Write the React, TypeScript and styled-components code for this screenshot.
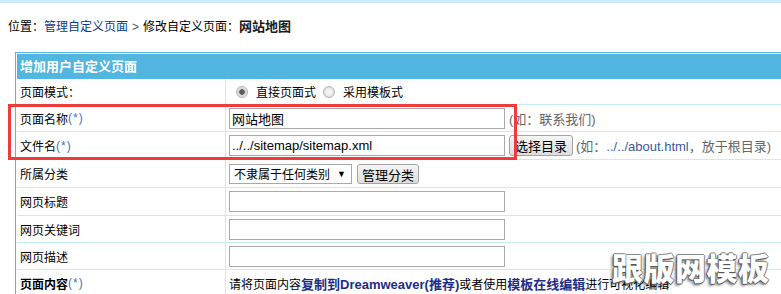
import styled, { createGlobalStyle } from "styled-components";

const GlobalStyle = createGlobalStyle`
  html, body {
    margin: 0;
    padding: 0;
    background: #fff;
    overflow: hidden;
  }
  body {
    font-family: "Liberation Sans", "Noto Sans CJK SC", sans-serif;
    font-size: 12px;
    color: #000;
  }
`;

const Page = styled.div`
  position: relative;
  width: 781px;
  height: 294px;
  overflow: hidden;
`;

const TopStrip = styled.div`
  height: 3px;
  background: #c8eefc;
`;

const Crumbs = styled.div`
  padding: 14px 0 0 8px;
  height: 20px;
  line-height: 20px;
  margin-bottom: 15px;
  white-space: nowrap;
`;

const CrumbLink = styled.a`
  color: #0d3a8e;
  text-decoration: none;
`;

const CrumbSep = styled.span`
  color: #555;
  margin: 0 4px;
`;

const CrumbCurrent = styled.b`
  color: #1a1a1a;
  font-size: 13px;
`;

const Panel = styled.div`
  margin-left: 15px;
  width: 800px;
  border: 1px solid #52b6e0;
  padding: 1px;
`;

const Header = styled.div`
  height: 25px;
  line-height: 25px;
  background: #52b6e0;
  color: #fff;
  font-weight: bold;
  font-size: 13px;
  padding-left: 3px;
`;

const Row = styled.div<{ $h?: number }>`
  display: grid;
  grid-template-columns: 208px 1fr;
  height: ${(p) => (p.$h ? `${p.$h}px` : "auto")};
  box-sizing: border-box;
  border-bottom: 1px solid #c6ebfa;
`;

const Label = styled.div<{ $strong?: boolean }>`
  display: flex;
  align-items: center;
  padding-left: 3px;
  font-weight: ${(p) => (p.$strong ? "bold" : "normal")};
  white-space: nowrap;
`;

const Star = styled.span`
  color: #3d74c5;
  font-weight: normal;
  letter-spacing: 1px;
`;

const Value = styled.div`
  display: flex;
  align-items: center;
  border-left: 1px solid #c6ebfa;
  padding-left: 3px;
  white-space: nowrap;
`;

const Radio = styled.span<{ $on?: boolean }>`
  width: 12px;
  height: 12px;
  box-sizing: border-box;
  border-radius: 50%;
  border: 1px solid #b2b2b2;
  margin: 0 8px 0 7px;
  background: ${(p) =>
    p.$on
      ? "radial-gradient(circle, #5c5c5c 0 2.5px, #cfcfcf 3px, #f2f2f2 6px)"
      : "radial-gradient(circle, #f4f4f4 0 2px, #dadada 6px)"};
`;

const TextInput = styled.input`
  width: 276px;
  height: 21px;
  box-sizing: border-box;
  border: 1px solid #a9a9a9;
  padding: 0 2px;
  margin: 0;
  font: inherit;
  font-size: 13px;
  color: #000;
  background: #fff;
  outline: none;
`;

const Button = styled.button<{ $w: number; $h?: number }>`
  width: ${(p) => p.$w}px;
  height: ${(p) => p.$h ?? 21}px;
  box-sizing: border-box;
  padding: 0;
  border: 1px solid #a3a3a3;
  border-radius: 3px;
  background: linear-gradient(#f6f6f6, #dddddd);
  font: inherit;
  font-size: 13px;
  color: #000;
`;

const FakeSelect = styled.div`
  width: 123px;
  height: 20px;
  box-sizing: border-box;
  border: 1px solid #a9a9a9;
  display: flex;
  align-items: center;
  justify-content: space-between;
  padding: 0 5px 0 4px;
  margin-right: 5px;
  font-size: 12px;
  background: #fff;
`;

const Arrow = styled.span`
  font-size: 9px;
`;

const Hint = styled.span<{ $gap: number }>`
  color: #666;
  font-size: 13px;
  margin-left: ${(p) => p.$gap}px;
`;

const HintPath = styled.span`
  color: #3e5a9c;
`;

const Gap = styled.span<{ $w: number }>`
  display: inline-block;
  width: ${(p) => p.$w}px;
`;

const Em = styled.b`
  color: #1c2d87;
  font-size: 13px;
`;

const Highlight = styled.div`
  position: absolute;
  left: 8px;
  top: 104px;
  width: 509px;
  height: 56px;
  box-sizing: border-box;
  border: 3px solid #f03b3b;
  pointer-events: none;
`;

const Watermark = styled.div`
  position: absolute;
  left: 612px;
  top: 246px;
  font-family: "Noto Sans CJK SC", sans-serif;
  font-size: 31px;
  font-weight: 900;
  line-height: 42px;
  letter-spacing: 0.5px;
  color: #fff;
  text-shadow: -1px 0 #555, 0 1px #555, 1px 0 #888, 0 -1px #888,
    -2px 2px 3px rgba(0, 0, 0, 0.55);
  pointer-events: none;
`;

export default function App() {
  return (
    <Page>
      <GlobalStyle />
      <TopStrip />
      <Crumbs>
        位置：<CrumbLink href="#">管理自定义页面</CrumbLink>
        <CrumbSep>&gt;</CrumbSep>修改自定义页面：<CrumbCurrent>网站地图</CrumbCurrent>
      </Crumbs>

      <Panel>
        <Header>增加用户自定义页面</Header>

        <Row $h={26}>
          <Label>页面模式：</Label>
          <Value>
            <Radio $on />
            直接页面式
            <Radio />
            采用模板式
          </Value>
        </Row>

        <Row $h={27}>
          <Label>
            页面名称<Star>(*)</Star>
          </Label>
          <Value>
            <TextInput defaultValue="网站地图" />
            <Hint $gap={4}>(如：联系我们)</Hint>
          </Value>
        </Row>

        <Row $h={28}>
          <Label>
            文件名<Star>(*)</Star>
          </Label>
          <Value>
            <TextInput defaultValue="../../sitemap/sitemap.xml" />
            <Gap $w={4} />
            <Button $w={64}>选择目录</Button>
            <Hint $gap={3}>
              (如：<HintPath>../../about.html</HintPath>，放于根目录)
            </Hint>
          </Value>
        </Row>

        <Row $h={28}>
          <Label>所属分类</Label>
          <Value>
            <FakeSelect>
              不隶属于任何类别<Arrow>▼</Arrow>
            </FakeSelect>
            <Button $w={62} $h={20}>
              管理分类
            </Button>
          </Value>
        </Row>

        <Row $h={28}>
          <Label>网页标题</Label>
          <Value>
            <TextInput />
          </Value>
        </Row>

        <Row $h={27}>
          <Label>网页关键词</Label>
          <Value>
            <TextInput />
          </Value>
        </Row>

        <Row $h={27}>
          <Label>网页描述</Label>
          <Value>
            <TextInput />
          </Value>
        </Row>

        <Row $h={27}>
          <Label $strong>
            页面内容<Star>(*)</Star>
          </Label>
          <Value>
            请将页面内容<Em>复制到Dreamweaver(推荐)</Em>或者使用<Em>模板在线编辑</Em>
            进行可视化编辑
          </Value>
        </Row>
      </Panel>

      <Highlight />
      <Watermark>跟版网模板</Watermark>
    </Page>
  );
}
